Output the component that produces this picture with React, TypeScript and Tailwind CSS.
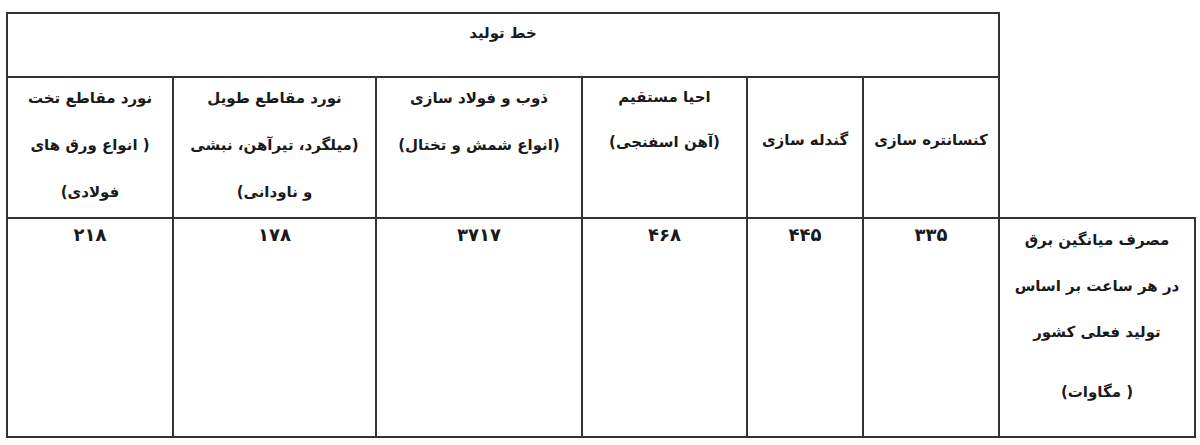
const cell = "border-2 border-[#333] text-center align-top p-0";
const num = "leading-[32px] text-[18px]";

export default function App() {
  return (
    <div className="w-[1200px] h-[445px] bg-white pt-[12px] pl-[6px] font-['DejaVu_Sans',sans-serif] text-[#1a1a1a]">
      <table dir="rtl" className="table-fixed border-collapse w-[1188px] font-bold text-[15px]">
        <colgroup>
          <col className="w-[196px]" />
          <col className="w-[136px]" />
          <col className="w-[116px]" />
          <col className="w-[165px]" />
          <col className="w-[206px]" />
          <col className="w-[203px]" />
          <col className="w-[166px]" />
        </colgroup>
        <tbody>
          {/* header row */}
          <tr className="h-[64px]">
            <td rowSpan={2} className="border-0 p-0"></td>
            <td colSpan={6} className={cell}>
              <div className="leading-[38px]">خط تولید</div>
            </td>
          </tr>
          {/* production lines */}
          <tr className="h-[141px]">
            <td className={cell}>
              <div className="pt-[39px] leading-[46px]">کنسانتره سازی</div>
            </td>
            <td className={cell}>
              <div className="pt-[39px] leading-[46px]">گندله سازی</div>
            </td>
            <td className={cell}>
              <div className="-mt-[3px] leading-[45px]">
                <div>احیا مستقیم</div>
                <div>(آهن اسفنجی)</div>
              </div>
            </td>
            <td className={cell}>
              <div className="-mt-[3px] leading-[47px]">
                <div>ذوب و فولاد سازی</div>
                <div>(انواع شمش و تختال)</div>
              </div>
            </td>
            <td className={cell}>
              <div className="-mt-[3px] leading-[47px]">
                <div>نورد مقاطع طویل</div>
                <div>(میلگرد، تیرآهن، نبشی</div>
                <div>و ناودانی)</div>
              </div>
            </td>
            <td className={cell}>
              <div className="-mt-[3px] leading-[47px]">
                <div>نورد مقاطع تخت</div>
                <div>( انواع ورق های</div>
                <div>فولادی)</div>
              </div>
            </td>
          </tr>
          {/* consumption row */}
          <tr className="h-[219px]">
            <td className={cell}>
              <div className="-mt-[2px] leading-[46px]">
                <div>مصرف میانگین برق</div>
                <div>در هر ساعت بر اساس</div>
                <div>تولید فعلی کشور</div>
                <div className="mt-[14px]">( مگاوات)</div>
              </div>
            </td>
            <td className={cell}>
              <div className={num}>۳۳۵</div>
            </td>
            <td className={cell}>
              <div className={num}>۴۴۵</div>
            </td>
            <td className={cell}>
              <div className={num}>۴۶۸</div>
            </td>
            <td className={cell}>
              <div className={num}>۳۷۱۷</div>
            </td>
            <td className={cell}>
              <div className={num}>۱۷۸</div>
            </td>
            <td className={cell}>
              <div className={num}>۲۱۸</div>
            </td>
          </tr>
        </tbody>
      </table>
    </div>
  );
}
